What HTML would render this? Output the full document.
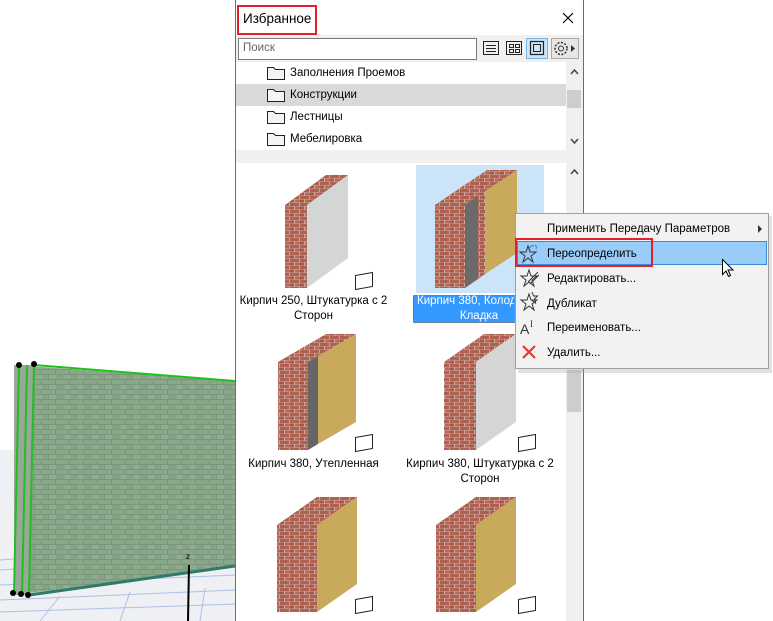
<!DOCTYPE html>
<html><head><meta charset="utf-8"><style>
*{margin:0;padding:0;box-sizing:border-box}
body{width:773px;height:621px;overflow:hidden;background:#fff;font-family:"Liberation Sans","DejaVu Sans",sans-serif;font-size:12px;color:#000;position:relative}
.abs{position:absolute}
.lbl{position:absolute;text-align:center;font-size:11.5px;line-height:15px;white-space:nowrap}
.ft{position:absolute;left:290px;font-size:11.5px}
.mi{position:absolute;left:547px;font-size:11.5px}
</style></head><body>
<svg class="abs" style="left:0;top:0" width="773" height="621">
<defs>
<pattern id="br" width="10" height="7" patternUnits="userSpaceOnUse">
<rect width="10" height="7" fill="#c9aaa2"/>
<rect x="0" y="0" width="9" height="3" fill="#b0604e"/>
<rect x="-5" y="3.5" width="9" height="3" fill="#a65848"/>
<rect x="5" y="3.5" width="9" height="3" fill="#b8695a"/>
</pattern>
<pattern id="gb" width="14" height="10" patternUnits="userSpaceOnUse">
<rect width="14" height="10" fill="#7b977b"/>
<rect x="0" y="0" width="13" height="4" fill="#8aa78a"/>
<rect x="-7" y="5" width="13" height="4" fill="#84a284"/>
<rect x="7" y="5" width="13" height="4" fill="#8fab90"/>
</pattern>
</defs>
<rect x="0" y="450" width="236" height="171" fill="#eef0f3"/>
<g stroke="#aec0e8" stroke-width="1" fill="none">
<line x1="0" y1="600" x2="236" y2="590"/><line x1="0" y1="612" x2="236" y2="604"/>
<line x1="0" y1="585" x2="236" y2="575"/><line x1="0" y1="570" x2="30" y2="568"/>
<line x1="0" y1="560" x2="25" y2="558"/><line x1="40" y1="621" x2="60" y2="596"/>
<line x1="120" y1="621" x2="130" y2="592"/><line x1="200" y1="621" x2="205" y2="588"/>
</g>
<polygon points="14,365 235,381 235,566 14,595" fill="url(#gb)"/>
<polygon points="14,365 33,365 28,595 14,595" fill="#9aa89a"/>
<g stroke="#1fc01f" stroke-width="2" fill="none">
<polyline points="19,365 14,594"/><polyline points="27,365 22,595"/><polyline points="34,365 29,595"/>
<polyline points="34,365 235,381"/>
</g>
<line x1="29" y1="595" x2="235" y2="566" stroke="#2f7a6a" stroke-width="3"/>
<g fill="#000"><circle cx="19" cy="365" r="3"/><circle cx="34" cy="364" r="3"/><circle cx="13" cy="593" r="3"/><circle cx="21" cy="594" r="3"/><circle cx="28" cy="595" r="3"/></g>
<line x1="189" y1="565" x2="188" y2="621" stroke="#000" stroke-width="2"/>
<text x="186" y="559" font-size="8" font-family="Liberation Sans">z</text>
<rect x="235" y="0" width="349" height="621" fill="#fff"/>
<rect x="236" y="150" width="347" height="13" fill="#f0f0f0"/>
<rect x="236" y="35" width="347" height="27" fill="#f0f0f0"/>
<rect x="566" y="62" width="17" height="88" fill="#f0f0f0"/>
<rect x="567" y="90" width="14" height="18" fill="#cdcdcd"/>
<rect x="566" y="163" width="17" height="458" fill="#f0f0f0"/>
<rect x="567" y="370" width="14" height="42" fill="#cdcdcd"/>
<line x1="235.5" y1="0" x2="235.5" y2="621" stroke="#2b7ad0"/>
<line x1="583.5" y1="0" x2="583.5" y2="621" stroke="#2b7ad0"/>
<rect x="236" y="84" width="330" height="22" fill="#d9d9d9"/>
<rect x="416" y="165" width="128" height="128" fill="#cce4f7"/>
<g>
<polygon points="285,205 307,205 348,175 326,175" fill="url(#br)"/>
<polygon points="307,205 348,175 348,258 307,288" fill="#d4d6d6"/>
<rect x="285" y="205" width="22" height="83" fill="url(#br)"/>
</g>
<g>
<polygon points="435,205 465,205 517,170 487,170" fill="url(#br)"/>
<polygon points="465,205 478,196 478,279 465,288" fill="#6a6a6a"/>
<polygon points="478,196 485,191 485,274 478,279" fill="url(#br)"/>
<polygon points="485,191 517,170 517,253 485,274" fill="#c9a95c"/>
<rect x="435" y="205" width="30" height="83" fill="url(#br)"/>
</g>
<g>
<polygon points="278,362 308,362 356,334 326,334" fill="url(#br)"/>
<polygon points="308,362 318,356 318,444 308,450" fill="#666"/>
<polygon points="318,356 356,334 356,422 318,444" fill="#c9a95c"/>
<rect x="278" y="362" width="30" height="88" fill="url(#br)"/>
</g>
<g>
<polygon points="444,362 476,362 516,334 484,334" fill="url(#br)"/>
<polygon points="476,362 516,334 516,422 476,450" fill="#d4d6d6"/>
<rect x="444" y="362" width="32" height="88" fill="url(#br)"/>
</g>
<g>
<polygon points="277,525 317,525 357,497 317,497" fill="url(#br)"/>
<polygon points="317,525 357,497 357,584 317,612" fill="#c9a95c"/>
<rect x="277" y="525" width="40" height="87" fill="url(#br)"/>
</g>
<g>
<polygon points="436,525 476,525 516,497 476,497" fill="url(#br)"/>
<polygon points="476,525 516,497 516,584 476,612" fill="#c9a95c"/>
<rect x="436" y="525" width="40" height="87" fill="url(#br)"/>
</g>
<g fill="#fff" stroke="#222" stroke-width="1">
<polygon points="355.5,275.5 372.5,272.5 372.5,286.5 355.5,289.5"/>
<polygon points="355.5,437.5 372.5,434.5 372.5,448.5 355.5,451.5"/>
<polygon points="518.5,437.5 535.5,434.5 535.5,448.5 518.5,451.5"/>
<polygon points="355.5,599.5 372.5,596.5 372.5,610.5 355.5,613.5"/>
<polygon points="518.5,599.5 535.5,596.5 535.5,610.5 518.5,613.5"/>
</g>
<g fill="#f4f4f4" stroke="#222" stroke-width="1">
<path d="M267.5,67.5h6l2,2h9v10h-17z"/>
<path d="M267.5,89.5h6l2,2h9v10h-17z"/>
<path d="M267.5,111.5h6l2,2h9v10h-17z"/>
<path d="M267.5,133.5h6l2,2h9v10h-17z"/>
</g>
<g stroke="#444" stroke-width="1.5" fill="none">
<polyline points="571,74 574.5,70 578,74"/><polyline points="571,139 574.5,143 578,139"/>
<polyline points="571,174 574.5,170 578,174"/>
</g>
<g stroke="#000" stroke-width="1.2"><line x1="563" y1="13" x2="573" y2="23"/><line x1="573" y1="13" x2="563" y2="23"/></g>
<g stroke="#222" fill="none" stroke-width="1">
<rect x="483.5" y="41.5" width="15" height="13"/>
<line x1="486" y1="45.5" x2="496" y2="45.5"/><line x1="486" y1="48.5" x2="496" y2="48.5"/><line x1="486" y1="51.5" x2="496" y2="51.5"/>
<rect x="506.5" y="41.5" width="15" height="13"/>
<rect x="509.5" y="44.5" width="4" height="3"/><rect x="515.5" y="44.5" width="4" height="3"/>
<rect x="509.5" y="49.5" width="4" height="3"/><rect x="515.5" y="49.5" width="4" height="3"/>
</g>
<rect x="526.5" y="38.5" width="21" height="20" fill="#cce4f7" stroke="#7ab3e0"/>
<rect x="530.5" y="41.5" width="13" height="13" fill="none" stroke="#222" stroke-width="1.2"/>
<rect x="533.5" y="44.5" width="7" height="7" fill="none" stroke="#222"/>
<rect x="551.5" y="38.5" width="27" height="20" fill="#e6e6e6" stroke="#aaa"/>
<circle cx="561" cy="48.5" r="6" fill="none" stroke="#333" stroke-width="1.5" stroke-dasharray="2 1.5"/>
<circle cx="561" cy="48.5" r="2.5" fill="none" stroke="#333"/>
<polygon points="571,45 575,48.5 571,52" fill="#333"/>
<rect x="238" y="6" width="78" height="28" fill="none" stroke="#e0202a" stroke-width="2"/>
<rect x="238.5" y="38.5" width="238" height="21" fill="#fff" stroke="#7a7a7a"/>
<rect x="413.5" y="295.5" width="130" height="27" fill="#3399ff" stroke="#333" stroke-dasharray="1 1"/>
<rect x="518" y="216" width="254" height="157" fill="#a0a0a0" opacity=".3"/>
<rect x="515.5" y="213.5" width="253" height="155" fill="#f2f2f2" stroke="#a0a0a0"/>
<polygon points="758,225 762,229 758,233" fill="#333"/>
<rect x="517.5" y="241.5" width="249" height="23" fill="#99ccf9" stroke="#3a8ad6"/>
<rect x="516" y="239" width="136" height="27" fill="none" stroke="#e0202a" stroke-width="2"/>
<g fill="none" stroke="#333" stroke-width="1">
<path d="M529,245 l2,6 6,0 -5,4 2,6 -5,-4 -5,4 2,-6 -5,-4 6,0z" transform="translate(-1,1)"/>
<path d="M529,270 l2,6 6,0 -5,4 2,6 -5,-4 -5,4 2,-6 -5,-4 6,0z"/>
<line x1="528" y1="282" x2="538" y2="272"/><line x1="530" y1="284" x2="539" y2="275"/>
<path d="M529,294 l2,6 6,0 -5,4 2,6 -5,-4 -5,4 2,-6 -5,-4 6,0z"/>
<path d="M532,292 l1.5,4 4,0 -3,3 1,4 -3.5,-2.5"/>
</g>
<g stroke="#2a7ae0" stroke-width="1" fill="none"><path d="M530,250 a3,3 0 0 1 4,-4"/><path d="M536,249 a3,3 0 0 0 -1,-4"/></g>
<text x="520" y="334" font-size="14" font-family="Liberation Sans" fill="#333">A</text>
<text x="530" y="327" font-size="9" font-family="Liberation Serif" fill="#333">I</text>
<g stroke="#e8362a" stroke-width="2"><line x1="523" y1="346" x2="535" y2="358"/><line x1="535" y1="346" x2="523" y2="358"/></g>
<path d="M722.5,259.5 v15 l3.5,-3.5 2.5,5.5 2,-1 -2.5,-5.5 h5z" fill="#fff" stroke="#000"/>
</svg>
<div class="abs" style="left:243px;top:11px;font-size:13.5px">Избранное</div>
<div class="abs" style="left:243px;top:42px;color:#666;font-size:11.5px">Поиск</div>
<div class="ft" style="top:67px">Заполнения Проемов</div>
<div class="ft" style="top:89px">Конструкции</div>
<div class="ft" style="top:111px">Лестницы</div>
<div class="ft" style="top:133px">Мебелировка</div>
<div class="lbl" style="left:236px;width:155px;top:294px">Кирпич 250, Штукатурка с 2<br>Сторон</div>
<div class="lbl" style="left:414px;width:100px;top:294px;color:#fff;text-align:left;padding-left:3px;overflow:hidden">Кирпич 380, Колод</div>
<div class="lbl" style="left:414px;width:130px;top:309px;color:#fff">Кладка</div>
<div class="lbl" style="left:236px;width:155px;top:457px">Кирпич 380, Утепленная</div>
<div class="lbl" style="left:400px;width:160px;top:457px">Кирпич 380, Штукатурка с 2<br>Сторон</div>
<div class="mi" style="top:223px">Применить Передачу Параметров</div>
<div class="mi" style="top:248px">Переопределить</div>
<div class="mi" style="top:273px">Редактировать...</div>
<div class="mi" style="top:298px">Дубликат</div>
<div class="mi" style="top:322px">Переименовать...</div>
<div class="mi" style="top:347px">Удалить...</div>
</body></html>
